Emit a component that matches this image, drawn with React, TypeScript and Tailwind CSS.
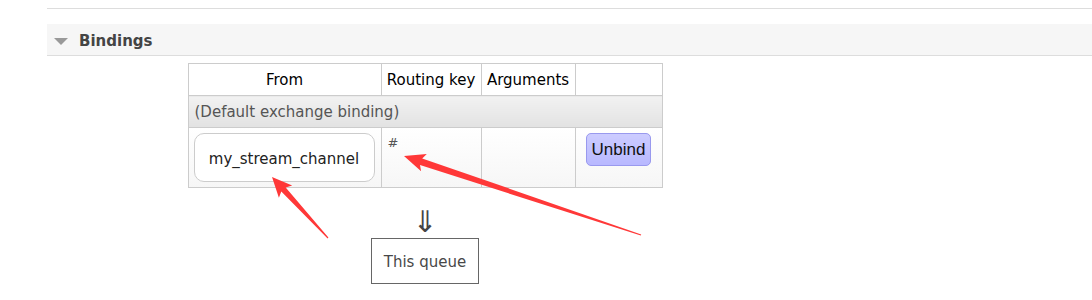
import React from "react";

type P = [number, number];

function arrowPoints(tail: P, tip: P, headLen: number, headHalf: number, shaftHalf: number, tailHalf: number): string {
  const dx = tip[0] - tail[0];
  const dy = tip[1] - tail[1];
  const len = Math.hypot(dx, dy);
  const ux = dx / len;
  const uy = dy / len;
  const nx = -uy;
  const ny = ux;
  const base: P = [tip[0] - ux * headLen, tip[1] - uy * headLen];
  const pts: P[] = [
    [tail[0] + nx * tailHalf, tail[1] + ny * tailHalf],
    [base[0] + nx * shaftHalf, base[1] + ny * shaftHalf],
    [base[0] - ux * 3 + nx * headHalf, base[1] - uy * 3 + ny * headHalf],
    tip,
    [base[0] - ux * 3 - nx * headHalf, base[1] - uy * 3 - ny * headHalf],
    [base[0] - nx * shaftHalf, base[1] - ny * shaftHalf],
    [tail[0] - nx * tailHalf, tail[1] - ny * tailHalf],
  ];
  return pts.map((p) => `${p[0].toFixed(1)},${p[1].toFixed(1)}`).join(" ");
}

export default function App() {
  const font = { fontFamily: '"DejaVu Sans", Verdana, "Noto Sans", sans-serif' };
  return (
    <div className="relative w-[1092px] h-[300px] bg-white overflow-hidden" style={font}>
      <div className="pl-[47px] pt-[8px]">
        <div className="border-t border-[#dddddd] h-[16px]" />
        <div className="bg-[#f6f6f6] border-b border-[#dddddd] h-[32px] flex items-center pl-[7px] pt-[3px]">
          <div className="w-0 h-0 border-l-[7px] border-r-[7px] border-t-[7px] border-l-transparent border-r-transparent border-t-[#999999]" />
          <span className="ml-[11px] text-[15px] font-bold text-[#444444]">Bindings</span>
        </div>
        <div className="pl-[141px] pt-[7px]">
          <div className="w-[474px] flex flex-col items-center">
            <table className="border-collapse w-[474px] table-fixed text-[15px] leading-[18px]">
              <colgroup>
                <col className="w-[193px]" />
                <col className="w-[100px]" />
                <col className="w-[94px]" />
                <col className="w-[87px]" />
              </colgroup>
              <thead>
                <tr className="h-[32px]">
                  <th className="border border-[#cccccc] font-normal text-black text-center p-0">From</th>
                  <th className="border border-[#cccccc] font-normal text-black text-center p-0 whitespace-nowrap">Routing key</th>
                  <th className="border border-[#cccccc] font-normal text-black text-center p-0">Arguments</th>
                  <th className="border border-[#cccccc] p-0" />
                </tr>
              </thead>
              <tbody>
                <tr className="h-[32px]">
                  <td colSpan={4} className="border border-[#cccccc] px-[6px] text-[#555555] bg-gradient-to-b from-[#f2f2f2] to-[#e2e2e2]">
                    (Default exchange binding)
                  </td>
                </tr>
                <tr className="h-[60px] bg-gradient-to-b from-white to-[#f6f6f6]">
                  <td className="border border-[#cccccc] p-[5px] align-top">
                    <div className="h-[49px] w-[181px] rounded-[10px] border border-[#cccccc] bg-white flex items-center justify-center text-[#222222] pt-[2px]">
                      my_stream_channel
                    </div>
                  </td>
                  <td className="border border-[#cccccc] px-[6px] pt-[8px] align-top text-[#555555] text-[13px] leading-[14px]">#</td>
                  <td className="border border-[#cccccc]" />
                  <td className="border border-[#cccccc] pt-[5px] align-top text-center">
                    <button className="h-[33px] w-[65px] rounded-[5px] border border-[#9999ee] bg-gradient-to-b from-[#ccccff] to-[#b8b8ff] text-[17px] text-[#111111] leading-none" style={{ fontFamily: '"Liberation Sans", Arial, sans-serif' }}>
                      Unbind
                    </button>
                  </td>
                </tr>
              </tbody>
            </table>
            <div className="mt-[19px] text-[30px] leading-[30px] text-[#444444]">⇓</div>
            <div className="mt-[1px] w-[108px] h-[46px] border border-[#666666] flex items-center justify-center pt-[3px] text-[15px] text-[#484848]">
              This queue
            </div>
          </div>
        </div>
      </div>
      <svg className="absolute left-0 top-0 pointer-events-none" width="1092" height="300" viewBox="0 0 1092 300">
        <polygon points={arrowPoints([328, 238], [272, 177], 17, 9, 3, 0.6)} fill="#ff3838" />
        <polygon points={arrowPoints([641, 235], [404, 156], 18, 9, 3.5, 0.6)} fill="#ff3838" />
      </svg>
    </div>
  );
}
